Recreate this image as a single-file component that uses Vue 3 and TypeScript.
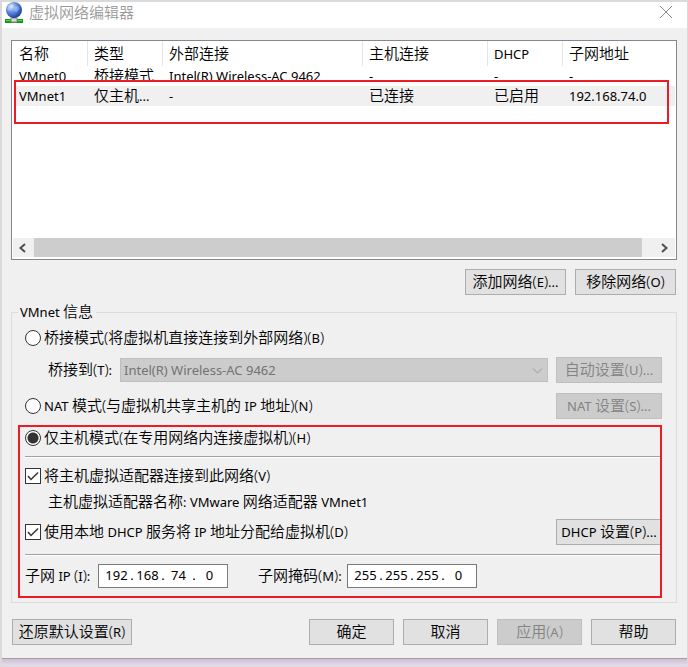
<script setup lang="ts">
import { h, ref } from 'vue'
import type { FunctionalComponent } from 'vue'

interface Network {
  name: string
  type: string
  external: string
  host: string
  dhcp: string
  subnet: string
}

// Splits a caption into Latin and CJK runs, since each script has its own size.
// Brackets around an access key are as tall as the CJK text.
const Caption: FunctionalComponent<{ text: string }> = (props) => {
  const runs = props.text.match(/[()]+|[ -'*-~]+|[^ -~]+/g) ?? []
  const kind = (run: string) => (/^[()]/.test(run) ? 'bracket' : /^[ -~]/.test(run) ? 'latin' : 'cjk')
  return h(
    'span',
    { class: 'caption' },
    runs.map((run) => h('span', { class: kind(run) }, run)),
  )
}
Caption.props = ['text']

const columns = ['名称', '类型', '外部连接', '主机连接', 'DHCP', '子网地址']

const networks: Network[] = [
  { name: 'VMnet0', type: '桥接模式', external: 'Intel(R) Wireless-AC 9462', host: '-', dhcp: '-', subnet: '-' },
  { name: 'VMnet1', type: '仅主机...', external: '-', host: '已连接', dhcp: '已启用', subnet: '192.168.74.0' },
]

const selected = ref('VMnet1')
const mode = ref('host')
const connectAdapter = ref(true)
const useDhcp = ref(true)
const subnetIp = ref(['192', '168', '74', '0'])
const subnetMask = ref(['255', '255', '255', '0'])
</script>

<template>
  <main class="window">
    <header class="titlebar">
      <svg class="app-icon" width="20" height="21" viewBox="0 0 20 21" aria-hidden="true">
        <defs>
          <radialGradient id="globe" cx="0.35" cy="0.3" r="0.75">
            <stop offset="0" stop-color="#d3e4ff" />
            <stop offset="0.4" stop-color="#6d97e4" />
            <stop offset="1" stop-color="#16399c" />
          </radialGradient>
        </defs>
        <rect x="8" y="14" width="4" height="4" fill="#8c8c8c" />
        <rect x="1" y="17" width="18" height="4" fill="#129a12" />
        <rect x="2" y="18" width="4" height="1" fill="#4fe04f" />
        <rect x="14" y="18" width="4" height="1" fill="#4fe04f" />
        <rect x="7" y="16" width="6" height="4" fill="#d8d8d8" stroke="#888" stroke-width="1" />
        <circle cx="10" cy="8" r="8" fill="url(#globe)" />
        <path d="M4 4q3-3 5-2l1 2-3 2-1 3-3-1zM11 5l3-1 1 3-2 3-3-1z" fill="#fff" opacity="0.25" />
      </svg>
      <h1 class="title">虚拟网络编辑器</h1>
      <button class="close" type="button" aria-label="关闭">
        <svg width="14" height="14" viewBox="0 0 14 14"><path d="M1 1L13 13M13 1L1 13" stroke="#888" fill="none" /></svg>
      </button>
    </header>

    <div class="content">
      <section class="list">
        <div class="list-body">
          <table>
            <colgroup>
              <col class="c-name" /><col class="c-type" /><col class="c-ext" />
              <col class="c-host" /><col class="c-dhcp" /><col />
            </colgroup>
            <thead>
              <tr>
                <th v-for="c in columns" :key="c" scope="col"><Caption :text="c" /></th>
              </tr>
            </thead>
            <tbody>
              <tr
                v-for="n in networks"
                :key="n.name"
                :class="{ selected: n.name === selected }"
                @click="selected = n.name"
              >
                <td v-for="(value, key) in n" :key="key"><div class="cell"><Caption :text="value" /></div></td>
              </tr>
            </tbody>
          </table>
        </div>
        <div class="scrollbar">
          <button type="button" aria-label="向左滚动">
            <svg width="9" height="10" viewBox="0 0 9 10"><path d="M7 1L2.500 5L7 9" stroke="#505050" stroke-width="2" fill="none" /></svg>
          </button>
          <div class="thumb"></div>
          <button class="right" type="button" aria-label="向右滚动">
            <svg width="9" height="10" viewBox="0 0 9 10"><path d="M2 1L6.500 5L2 9" stroke="#505050" stroke-width="2" fill="none" /></svg>
          </button>
        </div>
        <div class="mark mark-row"></div>
      </section>

      <div class="list-actions">
        <button class="btn medium" type="button"><Caption text="添加网络(E)..." /></button>
        <button class="btn medium" type="button"><Caption text="移除网络(O)" /></button>
      </div>

      <fieldset class="group">
        <legend><Caption text="VMnet 信息" /></legend>

        <div class="row">
          <label class="choice">
            <input v-model="mode" type="radio" name="mode" value="bridged" />
            <Caption text="桥接模式(将虚拟机直接连接到外部网络)(B)" />
          </label>
        </div>
        <div class="row bridge">
          <label class="bridge-label" for="bridge-to"><Caption text="桥接到(T):" /></label>
          <div class="combo">
            <select id="bridge-to" disabled>
              <option>Intel(R) Wireless-AC 9462</option>
            </select>
            <svg width="12" height="8" viewBox="0 0 12 8" aria-hidden="true"><path d="M1 1.500L5.500 6L10 1.500" stroke="#999" fill="none" /></svg>
          </div>
          <button class="btn wide" type="button" disabled><Caption text="自动设置(U)..." /></button>
        </div>
        <div class="row nat">
          <label class="choice">
            <input v-model="mode" type="radio" name="mode" value="nat" />
            <Caption text="NAT 模式(与虚拟机共享主机的 IP 地址)(N)" />
          </label>
          <button class="btn wide" type="button" disabled><Caption text="NAT 设置(S)..." /></button>
        </div>

        <div class="host">
          <div class="row host-mode">
            <label class="choice">
              <input v-model="mode" type="radio" name="mode" value="host" />
              <Caption text="仅主机模式(在专用网络内连接虚拟机)(H)" />
            </label>
          </div>
          <hr />
          <div class="row adapter">
            <label class="choice">
              <input v-model="connectAdapter" type="checkbox" />
              <Caption text="将主机虚拟适配器连接到此网络(V)" />
            </label>
          </div>
          <p class="adapter-name"><Caption text="主机虚拟适配器名称: VMware 网络适配器 VMnet1" /></p>
          <div class="row dhcp">
            <label class="choice">
              <input v-model="useDhcp" type="checkbox" />
              <Caption text="使用本地 DHCP 服务将 IP 地址分配给虚拟机(D)" />
            </label>
            <button class="btn wide" type="button"><Caption text="DHCP 设置(P)..." /></button>
          </div>
          <hr />
          <div class="row addresses">
            <label class="ip-label" for="ip-0"><Caption text="子网 IP (I):" /></label>
            <div class="ip">
              <template v-for="(_, i) in subnetIp" :key="i">
                <span v-if="i > 0">.</span>
                <input :id="`ip-${i}`" v-model="subnetIp[i]" type="text" maxlength="3" :aria-label="`子网 IP ${i + 1}`" />
              </template>
            </div>
            <label class="mask-label" for="mask-0"><Caption text="子网掩码(M):" /></label>
            <div class="ip">
              <template v-for="(_, i) in subnetMask" :key="i">
                <span v-if="i > 0">.</span>
                <input :id="`mask-${i}`" v-model="subnetMask[i]" type="text" maxlength="3" :aria-label="`子网掩码 ${i + 1}`" />
              </template>
            </div>
          </div>
          <div class="mark mark-host"></div>
        </div>
      </fieldset>

      <footer class="footer">
        <button class="btn restore" type="button"><Caption text="还原默认设置(R)" /></button>
        <button class="btn" type="button"><Caption text="确定" /></button>
        <button class="btn" type="button"><Caption text="取消" /></button>
        <button class="btn" type="button" disabled><Caption text="应用(A)" /></button>
        <button class="btn" type="button"><Caption text="帮助" /></button>
      </footer>
    </div>
    <div class="shadow"></div>
  </main>
</template>

<style>
body {
  background: #f0f0f0;
}
</style>

<style scoped>
.window {
  box-sizing: border-box;
  border: solid #dadada;
  border-width: 2px 1px 1px 2px;
  background: #f0f0f0;
  color: #000;
  font-family: "Noto Sans", "Noto Sans CJK SC", sans-serif;
  font-size: 13px;
  line-height: 20px;
}
:deep(.caption) {
  display: inline-block;
  padding-bottom: 2px;
  font-family: "Noto Sans CJK SC", sans-serif;
  font-size: 15px;
  font-weight: 350;
  line-height: 18px;
  vertical-align: top;
  white-space: nowrap;
}
:deep(.latin),
:deep(.bracket) {
  font-family: "Noto Sans", sans-serif;
  font-weight: 400;
  line-height: 1;
  white-space: pre;
}
:deep(.latin) {
  font-size: 13px;
}
:deep(.bracket) {
  font-size: 15px;
  font-weight: 300;
}
td :deep(.bracket) {
  font-size: 13px;
  font-weight: 400;
}
button,
input,
select {
  font: inherit;
  color: inherit;
  margin: 0;
}
.titlebar {
  display: flex;
  align-items: center;
  height: 26px;
  padding: 0 14px 0 2px;
  background: #fff;
}
.app-icon {
  margin-bottom: 5px;
}
.title {
  flex: 1;
  margin: 0 5px;
  padding-bottom: 6px;
  color: #999;
  font-family: "Noto Sans CJK SC", sans-serif;
  font-size: 15px;
  font-weight: 350;
}
.close {
  display: flex;
  padding: 0 0 6px;
  border: 0;
  background: none;
}
.content {
  padding: 12px 10px 13px 9px;
}
.list {
  position: relative;
  display: flex;
  flex-direction: column;
  box-sizing: border-box;
  height: 220px;
  border: 1px solid #828790;
  background: #fff;
}
.list-body {
  flex: 1;
  padding: 0 1px 0 3px;
}
table {
  width: 100%;
  table-layout: fixed;
  border-collapse: separate;
  border-spacing: 0;
}
.c-name {
  width: 73px;
}
.c-type,
.c-dhcp {
  width: 75px;
}
.c-ext {
  width: 200px;
}
.c-host {
  width: 125px;
}
th {
  height: 25px;
  padding: 0 0 0 6px;
  border-right: 1px solid #e5e5e5;
  box-sizing: border-box;
  font-weight: 400;
  text-align: left;
}
th:last-child {
  border-right: 0;
}
td {
  height: 20px;
  padding: 0 0 0 6px;
  vertical-align: top;
}
th:first-child,
td:first-child {
  padding-left: 4px;
}
.cell {
  height: 14px;
  overflow: hidden;
}
.selected .cell {
  height: 20px;
}
.selected td {
  background: #f0f0f0;
}
.scrollbar {
  display: flex;
  height: 19px;
  margin: 0 1px 2px;
  background: #f0f0f0;
}
.scrollbar button {
  display: flex;
  align-items: center;
  width: 21px;
  padding: 0 0 0 5px;
  border: 0;
  background: #f0f0f0;
}
.scrollbar .right {
  width: 33px;
  padding: 0 0 0 18px;
}
.thumb {
  flex: 1;
  background: #cdcdcd;
}
.mark {
  position: absolute;
  border: 2px solid #ed1c24;
  pointer-events: none;
}
.mark-row {
  top: 39px;
  left: 2px;
  right: 7px;
  height: 40px;
}
.mark-host {
  inset: -1px 0 -2px -7px;
}
.list-actions {
  display: flex;
  justify-content: flex-end;
  gap: 9px;
  padding: 9px 1px 7px 0;
}
.btn {
  box-sizing: border-box;
  width: 85px;
  height: 26px;
  padding: 0;
  border: 1px solid #adadad;
  border-radius: 0;
  background: #e1e1e1;
  text-align: center;
}
.btn.medium {
  width: 101px;
}
.btn.wide {
  width: 106px;
}
.btn:disabled {
  border-color: #bfbfbf;
  background: #ccc;
  color: #838383;
}
.group {
  min-width: 0;
  margin: 0;
  padding: 0 14px 6px 13px;
  border: 1px solid #dcdcdc;
}
legend {
  height: 20px;
  margin-left: -7px;
  padding: 0 3px 0 2px;
}
.row {
  display: flex;
  align-items: center;
  height: 32px;
}
.choice {
  display: flex;
  align-items: center;
  gap: 3px;
}
.choice input {
  appearance: none;
  box-sizing: border-box;
  width: 16px;
  height: 16px;
  border: 1px solid #333;
  background: #fff;
}
.choice input[type="radio"] {
  border-radius: 50%;
}
.choice input[type="radio"]:checked {
  background: radial-gradient(circle, #333 5px, #fff 6px);
}
.choice input[type="checkbox"]:checked {
  background: #fff url("data:image/svg+xml,%3Csvg xmlns='http://www.w3.org/2000/svg' viewBox='0 0 14 14'%3E%3Cpath d='M2 7l3 3.500L12 3.500' fill='none' stroke='%23333' stroke-width='1.500'/%3E%3C/svg%3E");
}
.bridge {
  padding-left: 23px;
}
.bridge-label {
  width: 72px;
}
.combo {
  position: relative;
  display: flex;
  flex: 1;
  margin-right: 8px;
}
.combo select {
  appearance: none;
  box-sizing: border-box;
  width: 100%;
  height: 24px;
  padding: 0 3px;
  border: 1px solid #bfbfbf;
  border-radius: 0;
  background: #ccc;
  color: #737373;
  opacity: 1;
}
.combo svg {
  position: absolute;
  right: 4px;
  top: 9px;
}
.nat,
.dhcp {
  justify-content: space-between;
}
.nat {
  height: 40px;
}
.host {
  position: relative;
}
.host-mode {
  height: 24px;
}
hr {
  height: 1px;
  margin: 0 2px 0 0;
  border: 0;
  border-bottom: 1px solid #fff;
  background: #a0a0a0;
}
.host-mode + hr {
  margin-top: 6px;
}
.adapter {
  height: 36px;
}
.adapter-name {
  display: flex;
  align-items: center;
  height: 16px;
  margin: 0;
  padding-left: 23px;
}
.dhcp {
  height: 44px;
}
.addresses {
  height: 40px;
}
.ip-label {
  width: 73px;
}
.mask-label {
  width: 89px;
  margin-left: 30px;
}
.ip {
  display: flex;
  align-items: center;
  box-sizing: border-box;
  width: 130px;
  height: 24px;
  padding: 0 4px 2px;
  border: 1px solid #7a7a7a;
  background: #fff;
}
.ip input {
  width: 27px;
  padding: 0;
  border: 0;
  background: none;
  text-align: center;
  outline: none;
}
.ip span {
  width: 4px;
  text-align: center;
}
.footer {
  display: flex;
  gap: 9px;
  padding: 16px 1px 0;
}
.btn.restore {
  width: 120px;
  margin-right: auto;
}
.shadow {
  height: 7px;
  border-top: 1px solid #a29da6;
  background: linear-gradient(#cbbfd0, #eadcef);
}
</style>
